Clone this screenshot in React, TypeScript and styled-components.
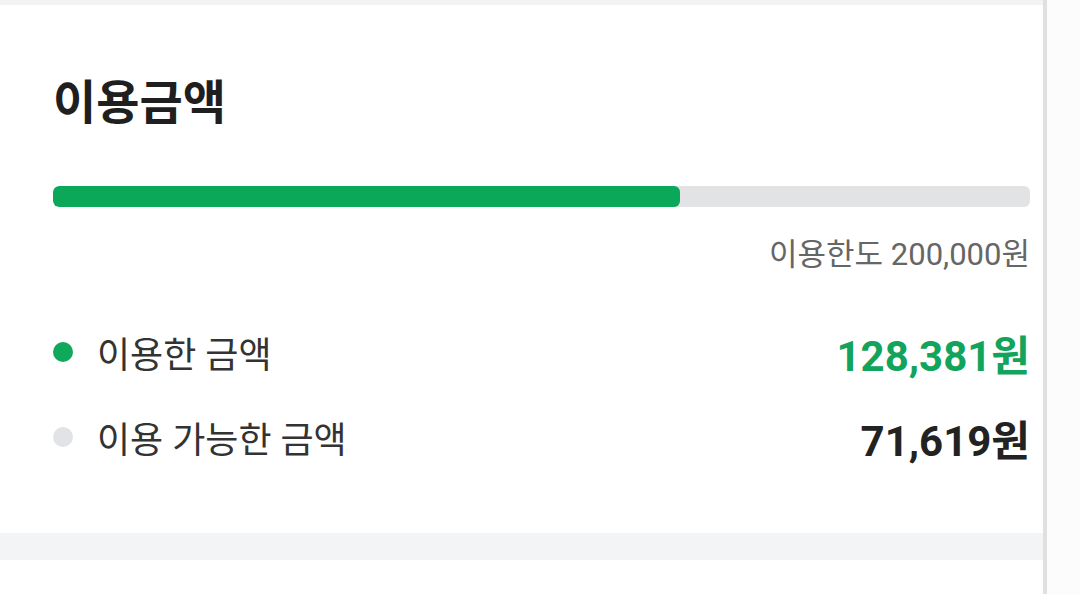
import * as React from "react";
import styled, { createGlobalStyle } from "styled-components";

const GlobalStyle = createGlobalStyle`
  html, body {
    margin: 0;
    padding: 0;
    background: #ffffff;
    font-family: Roboto, "Noto Sans CJK KR", sans-serif;
  }
`;

const LIMIT = 200000;
const USED = 128381;

const fmt = (n: number) => n.toLocaleString("en-US");

export default function App() {
  const pct = (USED / LIMIT) * 100;
  return (
    <>
      <GlobalStyle />
      <Page>
        <Main>
          <TopStrip />
          <Card>
            <Title>이용금액</Title>
            <Track>
              <Fill style={{ width: `${pct}%` }} />
            </Track>
            <Limit>이용한도 {fmt(LIMIT)}원</Limit>
            <Rows>
              <Row>
                <Label>
                  <Dot $color="#10a85a" />
                  이용한 금액
                </Label>
                <Amount $color="#12a35c">{fmt(USED)}원</Amount>
              </Row>
              <Row>
                <Label>
                  <Dot $color="#e2e3e6" />
                  이용 가능한 금액
                </Label>
                <Amount $color="#222222">{fmt(LIMIT - USED)}원</Amount>
              </Row>
            </Rows>
          </Card>
          <Band />
        </Main>
        <Divider />
        <Side />
      </Page>
    </>
  );
}

const Page = styled.div`
  display: flex;
  width: 1080px;
  height: 594px;
  overflow: hidden;
`;

const Main = styled.div`
  width: 1043px;
  display: flex;
  flex-direction: column;
`;

const TopStrip = styled.div`
  height: 5px;
  background: #f3f3f3;
`;

const Card = styled.div`
  height: 528px;
  box-sizing: border-box;
  padding: 62px 13px 0 53px;
  display: flex;
  flex-direction: column;
  background: #ffffff;
`;

const Title = styled.div`
  font-family: "Noto Sans CJK KR", sans-serif;
  font-size: 47px;
  font-weight: 700;
  color: #1f1f1f;
  line-height: 64px;
`;

const Track = styled.div`
  margin-top: 55px;
  height: 21px;
  border-radius: 6px;
  background: #e1e3e5;
  overflow: hidden;
`;

const Fill = styled.div`
  height: 100%;
  border-radius: 6px;
  background: #0ca85a;
`;

const Limit = styled.div`
  margin-top: 25px;
  align-self: flex-end;
  font-size: 31px;
  line-height: 46px;
  color: #666666;
`;

const Rows = styled.div`
  margin-top: 49px;
  display: flex;
  flex-direction: column;
  gap: 35px;
`;

const Row = styled.div`
  display: flex;
  align-items: center;
  justify-content: space-between;
  height: 50px;
`;

const Label = styled.div`
  display: flex;
  align-items: center;
  gap: 24px;
  font-size: 36px;
  color: #333333;
`;

const Dot = styled.span<{ $color: string }>`
  width: 20px;
  height: 20px;
  border-radius: 50%;
  background: ${(p) => p.$color};
  flex-shrink: 0;
`;

const Amount = styled.div<{ $color: string }>`
  font-size: 42px;
  font-weight: 700;
  color: ${(p) => p.$color};
`;

const Band = styled.div`
  height: 27px;
  background: #f2f4f5;
`;

const Divider = styled.div`
  width: 4px;
  background: #e0e0e0;
`;

const Side = styled.div`
  flex: 1;
  background: #fcfcfc;
`;
